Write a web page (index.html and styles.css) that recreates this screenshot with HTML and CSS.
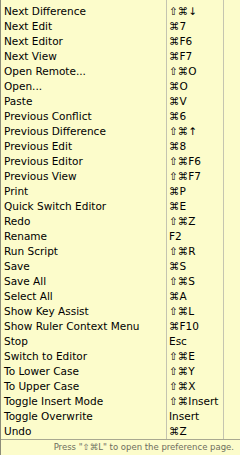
FILE: index.html
```html
<!DOCTYPE html>
<html>
<head>
<meta charset="utf-8">
<link rel="stylesheet" href="styles.css">
</head>
<body>
<div class="panel">
  <div class="list">
    <div class="row"><span class="name">Next Difference</span><span class="key">⇧⌘↓</span><span class="spare"></span></div>
    <div class="row"><span class="name">Next Edit</span><span class="key">⌘7</span><span class="spare"></span></div>
    <div class="row"><span class="name">Next Editor</span><span class="key">⌘F6</span><span class="spare"></span></div>
    <div class="row"><span class="name">Next View</span><span class="key">⌘F7</span><span class="spare"></span></div>
    <div class="row"><span class="name">Open Remote...</span><span class="key">⇧⌘O</span><span class="spare"></span></div>
    <div class="row"><span class="name">Open...</span><span class="key">⌘O</span><span class="spare"></span></div>
    <div class="row"><span class="name">Paste</span><span class="key">⌘V</span><span class="spare"></span></div>
    <div class="row"><span class="name">Previous Conflict</span><span class="key">⌘6</span><span class="spare"></span></div>
    <div class="row"><span class="name">Previous Difference</span><span class="key">⇧⌘↑</span><span class="spare"></span></div>
    <div class="row"><span class="name">Previous Edit</span><span class="key">⌘8</span><span class="spare"></span></div>
    <div class="row"><span class="name">Previous Editor</span><span class="key">⇧⌘F6</span><span class="spare"></span></div>
    <div class="row"><span class="name">Previous View</span><span class="key">⇧⌘F7</span><span class="spare"></span></div>
    <div class="row"><span class="name">Print</span><span class="key">⌘P</span><span class="spare"></span></div>
    <div class="row"><span class="name">Quick Switch Editor</span><span class="key">⌘E</span><span class="spare"></span></div>
    <div class="row"><span class="name">Redo</span><span class="key">⇧⌘Z</span><span class="spare"></span></div>
    <div class="row"><span class="name">Rename</span><span class="key">F2</span><span class="spare"></span></div>
    <div class="row"><span class="name">Run Script</span><span class="key">⇧⌘R</span><span class="spare"></span></div>
    <div class="row"><span class="name">Save</span><span class="key">⌘S</span><span class="spare"></span></div>
    <div class="row"><span class="name">Save All</span><span class="key">⇧⌘S</span><span class="spare"></span></div>
    <div class="row"><span class="name">Select All</span><span class="key">⌘A</span><span class="spare"></span></div>
    <div class="row"><span class="name">Show Key Assist</span><span class="key">⇧⌘L</span><span class="spare"></span></div>
    <div class="row"><span class="name">Show Ruler Context Menu</span><span class="key">⌘F10</span><span class="spare"></span></div>
    <div class="row"><span class="name">Stop</span><span class="key">Esc</span><span class="spare"></span></div>
    <div class="row"><span class="name">Switch to Editor</span><span class="key">⇧⌘E</span><span class="spare"></span></div>
    <div class="row"><span class="name">To Lower Case</span><span class="key">⇧⌘Y</span><span class="spare"></span></div>
    <div class="row"><span class="name">To Upper Case</span><span class="key">⇧⌘X</span><span class="spare"></span></div>
    <div class="row"><span class="name">Toggle Insert Mode</span><span class="key">⇧⌘Insert</span><span class="spare"></span></div>
    <div class="row"><span class="name">Toggle Overwrite</span><span class="key">Insert</span><span class="spare"></span></div>
    <div class="row"><span class="name">Undo</span><span class="key">⌘Z</span><span class="spare"></span></div>
  </div>
  <div class="footer">Press "⇧⌘L" to open the preference page.</div>
</div>
</body>
</html>
```

FILE: styles.css
```css
html, body {
  margin: 0;
  padding: 0;
  background: #fcfccb;
}
.panel {
  width: 240px;
  height: 455px;
  display: flex;
  flex-direction: column;
  font-family: "DejaVu Sans", sans-serif;
  color: #000;
  border-left: 1px solid #8c8c7a;
  box-sizing: border-box;
}
.list {
  flex: 1;
  display: flex;
  flex-direction: column;
  padding-top: 4px;
  background:
    linear-gradient(#c4c4b0, #c4c4b0) 165px 0 / 1px 100% no-repeat,
    linear-gradient(#c4c4b0, #c4c4b0) 222px 0 / 1px 100% no-repeat;
}
.row {
  display: grid;
  grid-template-columns: 165px 57px 1fr;
  height: 15px;
  line-height: 15px;
  font-size: 10.5px;
  white-space: nowrap;
}
.name {
  padding-left: 3px;
  overflow: hidden;
}
.key {
  padding-left: 3px;
}
.footer {
  height: 16px;
  border-top: 1px solid #a8a890;
  box-sizing: border-box;
  font-size: 8.5px;
  line-height: 15px;
  color: #6e6e5e;
  text-align: right;
  padding-right: 6px;
}
```
